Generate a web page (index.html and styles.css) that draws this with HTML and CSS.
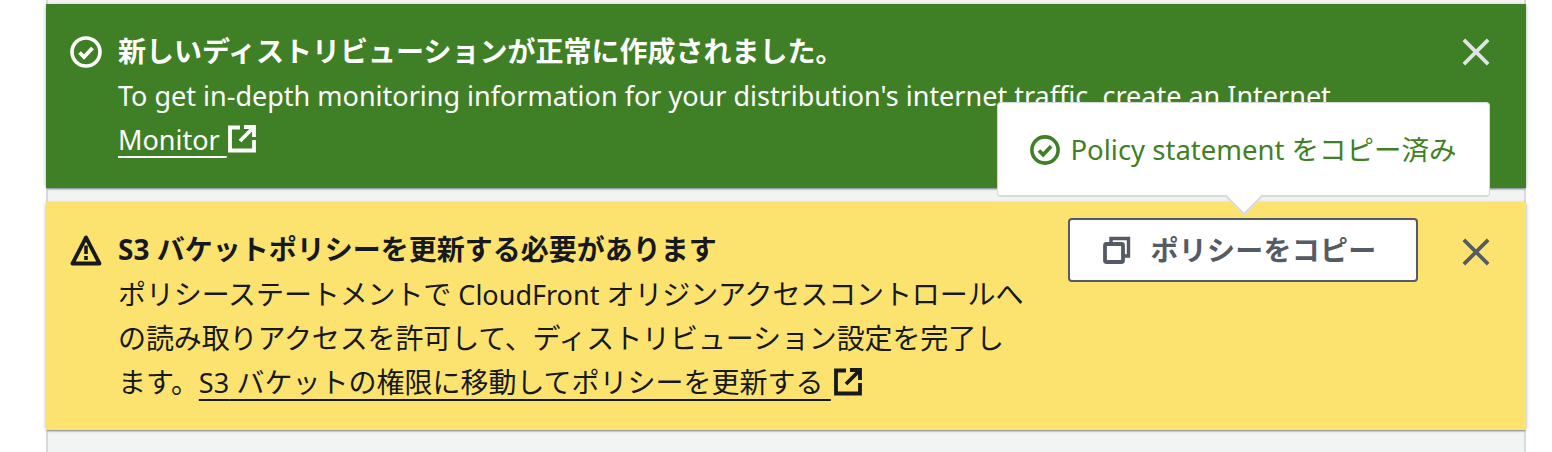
FILE: index.html
```html
<!DOCTYPE html>
<html lang="ja">
<head>
<meta charset="utf-8">
<title>Flash messages</title>
<link rel="stylesheet" href="styles.css">
</head>
<body>
<main class="page">
  <section class="alert alert-success">
    <svg class="status-icon" viewBox="0 0 32 32" aria-hidden="true"><circle cx="16" cy="16" r="14" fill="none" stroke="currentColor" stroke-width="3.6"/><path d="M9.5 16.5l4.5 4.500 8.500-9" fill="none" stroke="currentColor" stroke-width="3.8"/></svg>
    <div class="body">
      <div class="title">新しいディストリビューションが正常に作成されました。</div>
      <div class="message message-wide">To get in-depth monitoring information for your distribution's internet traffic, create an Internet <a class="link" href="#">Monitor </a><svg class="ext-icon ext-tight" viewBox="0 0 28 28" aria-hidden="true"><path d="M12 2.500H2v23h24V15M16 2h10v10M26 2L12 16" fill="none" stroke="currentColor" stroke-width="3.8"/></svg></div>
    </div>
    <button class="close" type="button" aria-label="閉じる"><svg viewBox="0 0 30 30" aria-hidden="true"><path d="M2 2l26 26M28 2L2 28" fill="none" stroke="currentColor" stroke-width="4"/></svg></button>
  </section>
  <section class="alert alert-warning">
    <svg class="status-icon" viewBox="0 0 32 32" aria-hidden="true"><path d="M16 3.500L2.500 29.500h27z" fill="none" stroke="currentColor" stroke-width="3.800" stroke-linejoin="round"/><path d="M16 11.500v8.500M16 22v4" fill="none" stroke="currentColor" stroke-width="3.6"/></svg>
    <div class="body">
      <div class="title">S3 バケットポリシーを更新する必要があります</div>
      <div class="message message-narrow">ポリシーステートメントで <span class="latin">CloudFront</span> オリジンアクセスコントロールへの読み取りアクセスを許可して、ディストリビューション設定を完了します。<a class="link" href="#"><span class="latin">S3</span> バケットの権限に移動してポリシーを更新する </a><svg class="ext-icon" viewBox="0 0 28 28" aria-hidden="true"><path d="M12 2.500H2v23h24V15M16 2h10v10M26 2L12 16" fill="none" stroke="currentColor" stroke-width="3.800"/></svg></div>
    </div>
    <div class="action">
      <button class="copy" type="button"><svg class="copy-icon" viewBox="0 0 28 28" aria-hidden="true"><path d="M8 8V2.500h17.500V20H20" fill="none" stroke="currentColor" stroke-width="3.400"/><rect x="2" y="8" width="18" height="18" rx="1.500" fill="none" stroke="currentColor" stroke-width="3.800"/></svg>ポリシーをコピー</button>
      <div class="popover"><svg class="pop-icon" viewBox="0 0 32 32" aria-hidden="true"><circle cx="16" cy="16" r="14" fill="none" stroke="currentColor" stroke-width="3.800"/><path d="M9.500 16.500l4.500 4.500 8.500-9" fill="none" stroke="currentColor" stroke-width="4"/></svg>Policy statement をコピー済み</div>
    </div>
    <button class="close close-dark" type="button" aria-label="閉じる"><svg viewBox="0 0 30 30" aria-hidden="true"><path d="M2 2l26 26M28 2L2 28" fill="none" stroke="currentColor" stroke-width="4"/></svg></button>
  </section>
</main>
</body>
</html>
```
FILE: styles.css
```css
* { box-sizing: border-box; }
html, body { margin: 0; background: #fff; }
body {
  height: 452px;
  overflow: hidden;
  font-family: "Noto Sans", "Noto Sans CJK JP", sans-serif;
  font-size: 28px;
  line-height: 44px;
  color: #16191f;
}
.page {
  width: 1480px;
  height: 452px;
  margin-left: 46px;
  padding-top: 4px;
  background: #f2f3f3;
  border-left: 2px solid #d5dbdb;
  border-right: 2px solid #d5dbdb;
  display: flex;
  flex-direction: column;
  gap: 14px;
}
.alert {
  display: flex;
  align-items: flex-start;
  margin: 0 -2px;
  padding: 25px 35px 26px 24px;
  box-shadow: 0 2px 2px -1px rgba(0, 28, 36, .5), 2px 0 3px -1px rgba(0, 28, 36, .18), -2px 0 3px -1px rgba(0, 28, 36, .18);
}
.alert-success { background: #3f7f25; color: #fff; }
.alert-warning { background: #fce36f; }
.status-icon { width: 32px; height: 32px; flex: none; margin: 7px 16px 0 0; }
.body { flex: 1; min-width: 0; }
.title { font-weight: 700; }
.message-wide { width: 1240px; margin-top: 1px; font-size: 27px; }
.message-narrow { width: 908px; height: 132px; letter-spacing: -.12px; margin-top: 1px; }
.latin { font-size: 27px; line-height: 1; letter-spacing: 0; }
.link {
  color: inherit;
  letter-spacing: 0;
  text-decoration: underline;
  text-decoration-thickness: 2px;
  text-underline-offset: 6px;
  text-decoration-skip-ink: none;
}
.ext-icon { width: 28px; height: 28px; vertical-align: -3px; margin-left: 3px; }
.ext-tight { margin-left: 1px; }
.close {
  flex: none;
  width: 30px;
  height: 28px;
  margin: 9px 0 0 43px;
  padding: 0;
  border: 0;
  background: none;
  color: #dfe3e4;
}
.close svg { display: block; width: 28px; height: 28px; margin: 0 auto; }
.close-dark { color: #545b64; margin-top: 11px; }
.action { position: relative; flex: none; margin-top: -9px; }
.copy {
  display: flex;
  align-items: center;
  justify-content: center;
  gap: 19px;
  width: 350px;
  height: 64px;
  padding: 0 6px 0 0;
  border: 2px solid #545b64;
  border-radius: 4px;
  background: #fff;
  color: #545b64;
  font: 700 28px/44px "Noto Sans", "Noto Sans CJK JP", sans-serif;
  letter-spacing: .25px;
}
.copy-icon { width: 28px; height: 28px; flex: none; }
.popover {
  position: absolute;
  left: -71px;
  bottom: calc(100% + 21px);
  width: 493px;
  height: 95px;
  display: flex;
  align-items: center;
  justify-content: center;
  gap: 10px;
  padding-top: 2px;
  background: #fff;
  border: 1px solid #d5dbdb;
  border-bottom-width: 2px;
  border-radius: 4px;
  color: #3f7f25;
  font-size: 27.5px;
  white-space: nowrap;
}
.popover::after {
  content: "";
  position: absolute;
  left: 233px;
  bottom: -15px;
  width: 24px;
  height: 24px;
  background: #fff;
  transform: rotate(45deg);
  border-right: 2px solid #d5dbdb;
  border-bottom: 2px solid #d5dbdb;
}
.pop-icon { width: 30px; height: 30px; flex: none; }
```
